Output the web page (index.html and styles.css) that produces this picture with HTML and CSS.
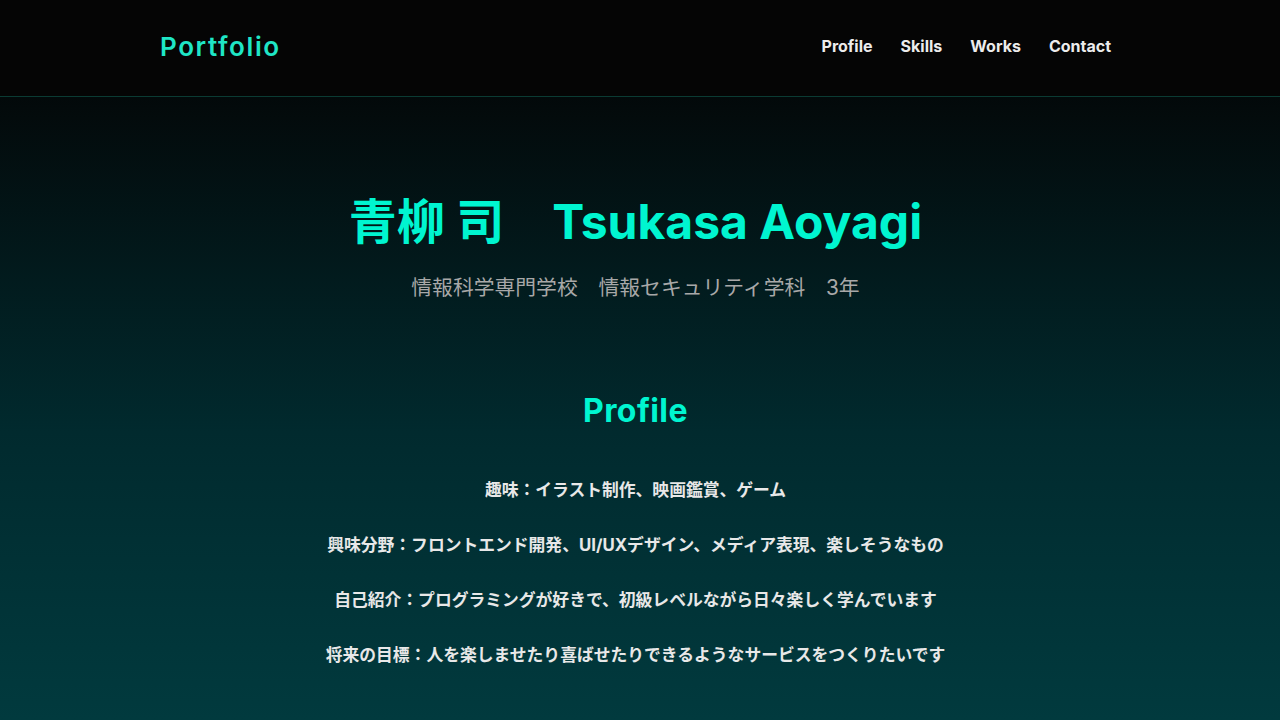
FILE: index.html
```html
<!DOCTYPE html>
<html lang="ja">
<head>
<meta charset="utf-8">
<title>Portfolio</title>
<link rel="stylesheet" href="styles.css">
</head>
<body>
<header class="site-header">
  <div class="header-inner">
    <a class="logo" href="#">Portfolio</a>
    <nav class="nav">
      <a href="#profile">Profile</a>
      <a href="#skills">Skills</a>
      <a href="#works">Works</a>
      <a href="#contact">Contact</a>
    </nav>
  </div>
</header>
<main class="main">
  <section class="hero">
    <h1 class="hero-name">青柳 司　Tsukasa Aoyagi</h1>
    <p class="hero-sub">情報科学専門学校　情報セキュリティ学科　3年</p>
  </section>
  <section class="profile" id="profile">
    <h2 class="section-title">Profile</h2>
    <p class="profile-line">趣味：イラスト制作、映画鑑賞、ゲーム</p>
    <p class="profile-line">興味分野：フロントエンド開発、UI/UXデザイン、メディア表現、楽しそうなもの</p>
    <p class="profile-line">自己紹介：プログラミングが好きで、初級レベルながら日々楽しく学んでいます</p>
    <p class="profile-line">将来の目標：人を楽しませたり喜ばせたりできるようなサービスをつくりたいです</p>
  </section>
</main>
</body>
</html>
```
FILE: styles.css
```css
* { box-sizing: border-box; }
html, body { margin: 0; padding: 0; }
body {
  min-height: 100vh;
  font-family: "Inter", "Noto Sans CJK JP", sans-serif;
  color: #e6e6e6;
  background: linear-gradient(to bottom, #000000 0%, #030a0b 15%, #012a2e 60%, #013a3e 100%);
}
.site-header {
  height: 97px;
  background: #050505;
  border-bottom: 1px solid #0b3b33;
}
.header-inner {
  width: 960px;
  margin: 0 auto;
  height: 96px;
  display: flex;
  align-items: center;
  justify-content: space-between;
  padding-right: 9px;
  padding-bottom: 4px;
}
.logo {
  color: #1fe6c6;
  font-size: 26px;
  font-weight: 600;
  letter-spacing: 1.6px;
  text-decoration: none;
}
.nav {
  display: flex;
  gap: 28px;
}
.nav a {
  color: #ececec;
  text-decoration: none;
  font-size: 16px;
  font-weight: 700;
}
.main {
  text-align: center;
  padding-right: 9px;
}
.hero {
  padding-top: 93px;
}
.hero-name {
  margin: 0;
  color: #00f5d0;
  font-size: 48px;
  font-weight: 700;
  line-height: 64px;
}
.hero-sub {
  margin: 19px 0 0;
  color: #a8a8a8;
  font-size: 20.8px;
  line-height: 30px;
}
.profile {
  padding-top: 88px;
}
.section-title {
  margin: 0;
  color: #00f5d0;
  font-size: 32px;
  font-weight: 700;
  line-height: 40px;
  letter-spacing: 0.4px;
}
.profile-line {
  margin: 0;
  font-size: 16.8px;
  font-weight: 700;
  line-height: 24px;
  color: #e8e8e8;
}
.section-title + .profile-line { margin-top: 47px; }
.profile-line + .profile-line { margin-top: 31px; }
```
